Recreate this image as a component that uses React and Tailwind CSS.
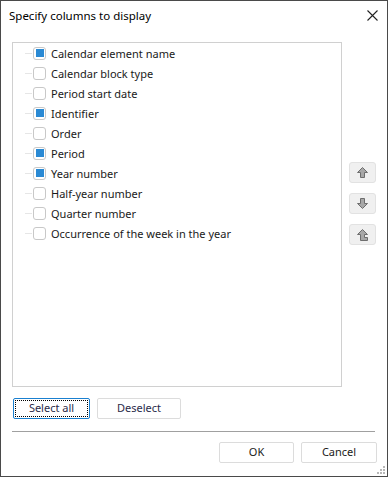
import React from "react";

const items = [
  ["Calendar element name", true],
  ["Calendar block type", false],
  ["Period start date", false],
  ["Identifier", true],
  ["Order", false],
  ["Period", true],
  ["Year number", true],
  ["Half-year number", false],
  ["Quarter number", false],
  ["Occurrence of the week in the year", false],
];

function Arrow({ kind }) {
  if (kind === "up")
    return (
      <svg width="11" height="11" viewBox="0 0 11 11">
        <path d="M5.5 0.5 L10.5 5.5 L7.5 5.5 L7.5 10.5 L3.5 10.5 L3.5 5.5 L0.5 5.5 Z" fill="#a8a8a8" stroke="#6e6e6e" strokeWidth="1" strokeLinejoin="round" />
      </svg>
    );
  if (kind === "down")
    return (
      <svg width="11" height="11" viewBox="0 0 11 11">
        <path d="M5.5 10.5 L10.5 5.5 L7.5 5.5 L7.5 0.5 L3.5 0.5 L3.5 5.5 L0.5 5.5 Z" fill="#a8a8a8" stroke="#6e6e6e" strokeWidth="1" strokeLinejoin="round" />
      </svg>
    );
  return (
    <svg width="11" height="12" viewBox="0 0 11 12">
      <path d="M5.5 0.5 L10.5 5.5 L7.5 5.5 L7.5 8.5 L10.5 8.5 L10.5 11.5 L3.5 11.5 L3.5 5.5 L0.5 5.5 Z" fill="#a8a8a8" stroke="#6e6e6e" strokeWidth="1" strokeLinejoin="round" />
    </svg>
  );
}

function SideBtn({ kind }) {
  return (
    <div className="w-[27px] h-[21px] rounded-[3px] border border-[#e2e2e2] bg-[#f0f0f0] flex items-center justify-center">
      <Arrow kind={kind} />
    </div>
  );
}

export default function App() {
  return (
    <div
      className="w-[388px] h-[477px] border border-[#4a4a4a] bg-white flex flex-col relative text-[11px] text-[#1a1a1a]"
      style={{ fontFamily: '"Noto Sans", "Open Sans", sans-serif' }}
    >
      <div className="h-[29px] flex items-center justify-between pl-[8px] pr-[9px] shrink-0">
        <span className="text-[11.5px] text-black">Specify columns to display</span>
        <svg width="11" height="11" viewBox="0 0 11 11">
          <path d="M0.5 0.5 L10.5 10.5 M10.5 0.5 L0.5 10.5" stroke="#222" strokeWidth="1.1" />
        </svg>
      </div>
      <div className="flex pl-[11px] mt-[12px]">
        <div className="w-[330px] h-[345px] border border-[#d0d0d0]">
          {items.map(([label, checked]) => (
            <div key={label} className="h-[20px] flex items-center">
              <div className="w-[7px] ml-[12px] h-px bg-[#e6e6e6]" />
              <div className="ml-[1px] w-[13px] h-[13px] rounded-[3px] border border-[#c8c8c8] bg-white flex items-center justify-center">
                {checked && <div className="w-[8px] h-[8px] bg-[#2a8ad4]" />}
              </div>
              <span className="ml-[5px] leading-none">{label}</span>
            </div>
          ))}
        </div>
        <div className="ml-[7px] pt-[120px] flex flex-col gap-[10px]">
          <SideBtn kind="up" />
          <SideBtn kind="down" />
          <SideBtn kind="top" />
        </div>
      </div>
      <div className="flex pl-[12px] mt-[11px] gap-[7px]">
        <div className="w-[77px] h-[21px] border border-[#1a80d0] rounded-[2px] bg-white p-[1px]">
          <div className="w-full h-full border border-dotted border-black flex items-center justify-center text-[#2b2b4a]">
            Select all
          </div>
        </div>
        <div className="w-[84px] h-[21px] border border-[#dcdcdc] rounded-[2px] bg-white flex items-center justify-center text-[#2b2b4a]">
          Deselect
        </div>
      </div>
      <div className="ml-[11px] mt-[12px] w-[363px] h-px bg-[#a0a0a0]" />
      <div className="flex justify-end pr-[10px] mt-[10px] gap-[7px]">
        <div className="w-[75px] h-[21px] border border-[#dcdcdc] rounded-[2px] bg-white flex items-center justify-center">
          OK
        </div>
        <div className="w-[76px] h-[21px] border border-[#dcdcdc] rounded-[2px] bg-white flex items-center justify-center">
          Cancel
        </div>
      </div>
      <svg className="absolute right-[1px] bottom-[1px]" width="10" height="10" viewBox="0 0 10 10">
        <rect x="7" y="1" width="2" height="2" fill="#b8b8b8" />
        <rect x="4" y="4" width="2" height="2" fill="#b8b8b8" />
        <rect x="7" y="4" width="2" height="2" fill="#b8b8b8" />
        <rect x="1" y="7" width="2" height="2" fill="#b8b8b8" />
        <rect x="4" y="7" width="2" height="2" fill="#b8b8b8" />
        <rect x="7" y="7" width="2" height="2" fill="#b8b8b8" />
      </svg>
    </div>
  );
}
